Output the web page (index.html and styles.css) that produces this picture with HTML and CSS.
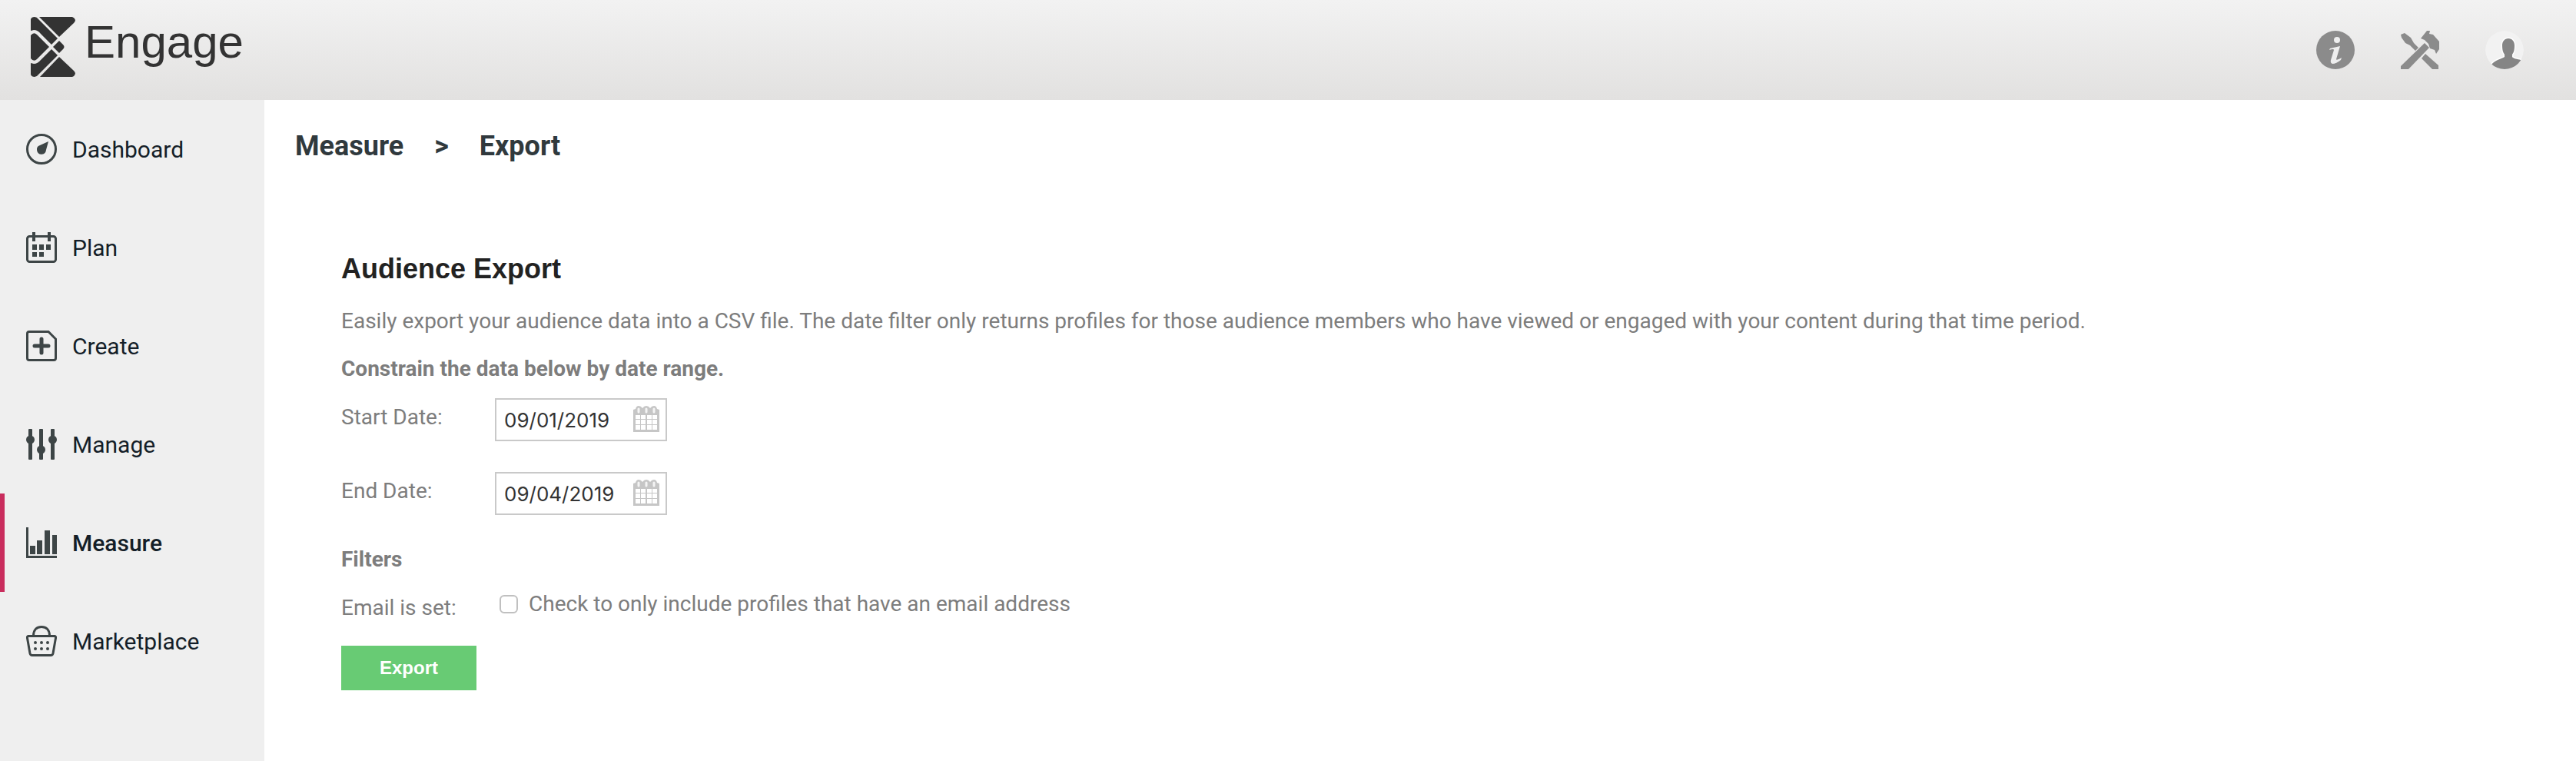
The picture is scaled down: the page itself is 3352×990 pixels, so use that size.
FILE: index.html
```html
<!DOCTYPE html>
<html lang="en">
<head>
  <meta charset="UTF-8">
  <meta name="viewport" content="width=device-width, initial-scale=1.0">
  <title>Engage - Audience Export</title>
  <link rel="stylesheet" href="styles.css">
</head>
<body>
  <header class="topbar">
    <a href="#" class="brand">
      <svg class="brand-mark" viewBox="0 0 58 78" fill="#333">
        <path d="M11 0H54Q57 1 58 4Q58 6 56 8L37 26Z"/>
        <path d="M0 3Q1 0 5 0Q8 0 10 3L35 28L27 36L13 22Q9 17 4 17L0 18Z"/>
        <path d="M0 24Q4 19 8 23L24 39L8 55Q4 59 0 54Z"/>
        <path d="M37 31L42 36Q45 39 42 42L37 47L29 39Z"/>
        <path d="M0 75Q1 78 5 78Q8 78 10 75L35 50L27 42L13 56Q9 61 4 61L0 60Z"/>
        <path d="M12 78H54Q57 77 58 74Q58 72 56 70L37 52Z"/>
      </svg>
      <span class="brand-name">Engage</span>
    </a>
    <nav class="tools">
      <a href="#" aria-label="Information">
        <svg viewBox="0 0 50 50">
          <circle cx="25" cy="25" r="25" fill="#8b8b8b"/>
          <circle cx="27" cy="12" r="4" fill="#eee"/>
          <path d="M18 23L31 20L26 37Q26 39 33 35L32 38Q26 43 21 43Q18 42 19 38L23 25Q23 23 17 25Z" fill="#eee"/>
        </svg>
      </a>
      <a href="#" aria-label="Settings">
        <svg viewBox="0 0 50 50" fill="#8b8b8b">
          <path d="M0 5L5 3L13 9L17 16L23 22L19 26L12 19L6 16L1 9Z"/>
          <path d="M32 30L49 45V50H41L27 36Z"/>
          <path d="M0 46L31 16L37 22L10 50H0Z"/>
          <path d="M26 10L34 0H38L37 4L42 5L50 14V24L46 30L44 25L38 23L36 17L31 12Z"/>
        </svg>
      </a>
      <a href="#" aria-label="Profile">
        <svg viewBox="0 0 50 50">
          <clipPath id="avatar-clip"><circle cx="25" cy="25" r="25"/></clipPath>
          <g clip-path="url(#avatar-clip)">
            <circle cx="25" cy="25" r="25" fill="#f2f2f2"/>
            <path d="M30 10C25 10 22 14 22 19C22 25 23 28 25 31V34C23 36 12 38 8 44V50H46V38C42 37 36 36 35 34V31C37 28 38 25 38 19C38 14 35 10 30 10Z" fill="#858585" stroke="#fff" stroke-width="3" paint-order="stroke"/>
          </g>
        </svg>
      </a>
    </nav>
  </header>

  <div class="layout">
    <nav class="sidebar">
      <a href="#" class="nav-item">
        <svg viewBox="0 0 40 40">
          <circle cx="20" cy="20" r="18.500" fill="none" stroke="#3d4546" stroke-width="3"/>
          <path d="M29 10L26 21A6 6 0 1 1 18 15Z" fill="#3d4546"/>
        </svg>
        Dashboard
      </a>
      <a href="#" class="nav-item">
        <svg viewBox="0 0 40 40" fill="#3d4546">
          <rect x="1.500" y="5.500" width="37" height="33" rx="3" fill="none" stroke="#3d4546" stroke-width="3"/>
          <path d="M8 0h4v12h-4zM28 0h4v12h-4zM8 16h6v7h-6zM17 16h6v7h-6zM26 16h6v7h-6zM8 26h6v6h-6zM17 26h6v6h-6z"/>
        </svg>
        Plan
      </a>
      <a href="#" class="nav-item">
        <svg viewBox="0 0 40 40" fill="none" stroke="#3d4546" stroke-width="3">
          <path d="M4 1.500H29L38.500 11V36Q38.500 38.500 36 38.500H4Q1.500 38.500 1.500 36V4Q1.500 1.500 4 1.500Z"/>
          <path d="M20 11V29M11 20H29" stroke-width="5" stroke-linecap="round"/>
        </svg>
        Create
      </a>
      <a href="#" class="nav-item">
        <svg viewBox="0 0 40 40" fill="#3d4546">
          <rect x="3" y="0" width="5" height="40" rx="1"/>
          <rect x="17" y="0" width="5" height="40" rx="1"/>
          <rect x="32" y="0" width="5" height="40" rx="1"/>
          <circle cx="5.500" cy="14" r="5.500"/>
          <circle cx="19.500" cy="27" r="5.500"/>
          <circle cx="34.500" cy="14" r="5.500"/>
        </svg>
        Manage
      </a>
      <a href="#" class="nav-item active">
        <svg viewBox="0 0 40 40" fill="#3d4546">
          <path d="M0 0h3v37h37v3h-40zM5 24h7v11h-7zM14 17h7v18h-7zM24 4h7v31h-7zM34 10h6v25h-6z"/>
        </svg>
        Measure
      </a>
      <a href="#" class="nav-item">
        <svg viewBox="0 0 40 40" fill="none" stroke="#3d4546" stroke-width="3">
          <path d="M3 13.500H37Q39 14 38.500 16L35 36Q34.500 38.500 32 38.500H8Q5.500 38.500 5 36L1.500 16Q1 14 3 13.500Z"/>
          <path d="M9.500 13C9.500 5 14 1.500 20 1.500S30.500 5 30.500 13"/>
          <path d="M12 22h0M20 22h0M28 22h0M12 30h0M20 30h0M28 30h0" stroke-width="4" stroke-linecap="round"/>
        </svg>
        Marketplace
      </a>
    </nav>

    <main class="content">
      <div class="breadcrumb">
        <a href="#">Measure</a>
        <span>&gt;</span>
        <span>Export</span>
      </div>

      <form class="export-form">
        <h1>Audience Export</h1>
        <p class="intro">Easily export your audience data into a CSV file. The date filter only returns profiles for those audience members who have viewed or engaged with your content during that time period.</p>

        <h2>Constrain the data below by date range.</h2>
        <div class="form-row">
          <label class="row-label" for="startDate">Start Date:</label>
          <div class="date-field">
            <input type="text" id="startDate" value="09/01/2019">
            <svg viewBox="0 0 34 36">
              <path d="M0 5L3 4Q4 0 7 0T12 3Q14 0 17 0T22 3Q24 0 27 0T31 4L34 5V34H0Z" fill="#c6c6c6"/>
              <path d="M3 12h6v5h-6zM10 12h6v5h-6zM18 12h6v5h-6zM25 12h6v5h-6zM3 18h6v6h-6zM10 18h6v6h-6zM18 18h6v6h-6zM25 18h6v6h-6zM3 25h6v6h-6zM10 25h6v6h-6zM18 25h6v6h-6zM25 25h6v6h-6z" fill="#fff"/>
              <path d="M7 4V8M17 4V8M27 4V8" stroke="#f4f4f4" stroke-width="3" stroke-linecap="round"/>
            </svg>
          </div>
        </div>
        <div class="form-row">
          <label class="row-label" for="endDate">End Date:</label>
          <div class="date-field">
            <input type="text" id="endDate" value="09/04/2019">
            <svg viewBox="0 0 34 36">
              <path d="M0 5L3 4Q4 0 7 0T12 3Q14 0 17 0T22 3Q24 0 27 0T31 4L34 5V34H0Z" fill="#c6c6c6"/>
              <path d="M3 12h6v5h-6zM10 12h6v5h-6zM18 12h6v5h-6zM25 12h6v5h-6zM3 18h6v6h-6zM10 18h6v6h-6zM18 18h6v6h-6zM25 18h6v6h-6zM3 25h6v6h-6zM10 25h6v6h-6zM18 25h6v6h-6zM25 25h6v6h-6z" fill="#fff"/>
              <path d="M7 4V8M17 4V8M27 4V8" stroke="#f4f4f4" stroke-width="3" stroke-linecap="round"/>
            </svg>
          </div>
        </div>

        <h2 class="filters-title">Filters</h2>
        <div class="filter-row">
          <span class="row-label">Email is set:</span>
          <label class="check">
            <input type="checkbox" id="emailSet">
            Check to only include profiles that have an email address
          </label>
        </div>

        <button type="submit">Export</button>
      </form>
    </main>
  </div>
</body>
</html>
```

FILE: styles.css
```css
* {
  box-sizing: border-box;
}

body {
  margin: 0;
  min-height: 100vh;
  display: flex;
  flex-direction: column;
  font-family: Roboto, Arial, sans-serif;
  font-size: 28px;
  color: #7d7d7d;
  background-color: #fff;
}

a {
  color: inherit;
  text-decoration: none;
}

svg {
  display: block;
}

/* Top bar */
.topbar {
  display: flex;
  justify-content: space-between;
  align-items: center;
  height: 130px;
  padding: 0 68px 0 40px;
  background: linear-gradient(#f2f2f2, #e2e1e0);
}

.brand {
  display: flex;
  gap: 12px;
  padding-bottom: 8px;
  color: #333;
}

.brand-mark {
  width: 58px;
  height: 78px;
}

.brand-name {
  font-family: "Liberation Sans", Arial, sans-serif;
  font-size: 60px;
  line-height: 66px;
}

.tools {
  display: flex;
  gap: 60px;
}

.tools svg {
  width: 50px;
  height: 50px;
}

.layout {
  display: flex;
  flex: 1;
}

/* Sidebar */
.sidebar {
  flex: 0 0 344px;
  background-color: #efefef;
}

.nav-item {
  display: flex;
  align-items: center;
  gap: 20px;
  height: 128px;
  padding-left: 28px;
  border-left: 6px solid transparent;
  font-size: 30px;
  color: #141e28;
}

.nav-item svg {
  width: 40px;
  height: 40px;
}

.nav-item.active {
  border-left-color: #c92d5d;
  font-weight: 500;
}

/* Main content */
.content {
  flex: 1;
  padding: 38px 40px;
}

.breadcrumb {
  display: flex;
  gap: 40px;
  font-size: 36px;
  line-height: 44px;
  font-weight: bold;
  color: #30393d;
}

.export-form {
  padding: 116px 60px 0;
}

h1 {
  margin: 0;
  font-family: "Liberation Sans", Arial, sans-serif;
  font-size: 36px;
  line-height: 44px;
  color: #222;
}

.intro {
  margin: 26px 0 22px;
  line-height: 40px;
}

h2 {
  margin: 0 0 18px;
  font-size: 28px;
  line-height: 40px;
}

.filters-title {
  margin-top: 38px;
}

.form-row,
.filter-row {
  display: flex;
  align-items: flex-start;
}

.form-row + .form-row {
  margin-top: 40px;
}

.row-label {
  width: 200px;
  line-height: 50px;
}

.date-field {
  display: flex;
  align-items: center;
  width: 224px;
  height: 56px;
  padding: 0 8px 0 10px;
  border: 2px solid #c9c9c9;
}

.date-field input {
  flex: 1;
  min-width: 0;
  padding: 0;
  border: none;
  outline: none;
  background: none;
  font-family: Inter, Arial, sans-serif;
  font-size: 26px;
  color: #333;
}

.date-field svg {
  width: 34px;
  height: 36px;
}

.check {
  display: flex;
  align-items: center;
  gap: 14px;
  padding-left: 6px;
  line-height: 40px;
}

.check input {
  appearance: none;
  width: 24px;
  height: 24px;
  margin: 0;
  border: 2px solid #c0c0c0;
  border-radius: 6px;
  background-color: #fff;
}

.check input:checked {
  background-color: #68cb74;
}

button {
  width: 176px;
  height: 58px;
  margin-top: 24px;
  padding: 0;
  border: none;
  background-color: #68cb74;
  color: #fff;
  font-family: "Liberation Sans", Arial, sans-serif;
  font-size: 24px;
  font-weight: bold;
  cursor: pointer;
}

button:hover {
  background-color: #57b963;
}
```
